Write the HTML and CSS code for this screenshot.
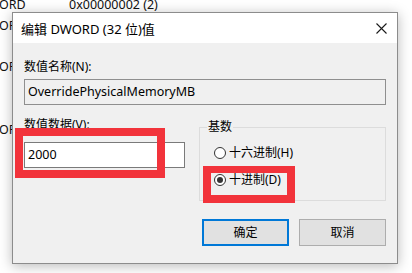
FILE: index.html
```html
<!DOCTYPE html>
<html lang="zh-CN">
<head>
<meta charset="utf-8">
<title>编辑 DWORD (32 位)值</title>
<link rel="stylesheet" href="styles.css">
</head>
<body>
<div class="desk">
  <div class="bg-list">
    <div class="bg-row"><span class="bg-type">ORD</span><span class="bg-data">0x00000002 (2)</span></div>
    <div class="bg-row"><span class="bg-type clip">ORD</span></div>
    <div class="bg-row"></div>
    <div class="bg-row"><span class="bg-type clip">ORD</span></div>
    <div class="bg-row"></div>
    <div class="bg-row"></div>
    <div class="bg-row"><span class="bg-type clip">ORD</span></div>
  </div>

  <div class="dialog">
    <div class="titlebar">
      <span class="title">编辑 DWORD (32 位)值</span>
      <svg class="close" width="11" height="11" viewBox="0 0 11 11" aria-hidden="true">
        <path d="M0.5 0.5 L10.5 10.5 M10.5 0.5 L0.5 10.5" stroke="#1a1a1a" stroke-width="1.1" fill="none"/>
      </svg>
    </div>
    <div class="body">
      <div class="label">数值名称(N):</div>
      <div class="field readonly">OverridePhysicalMemoryMB</div>
      <div class="row">
        <div class="col-left">
          <div class="label">数值数据(V):</div>
          <div class="field value">2000</div>
        </div>
        <fieldset class="group">
          <legend>基数</legend>
          <div class="radio"><span class="dot"></span><span>十六进制(H)</span></div>
          <div class="radio"><span class="dot checked"></span><span>十进制(D)</span></div>
        </fieldset>
      </div>
      <div class="buttons">
        <div class="btn default">确定</div>
        <div class="btn">取消</div>
      </div>
    </div>
  </div>

  <div class="mark mark-value"></div>
  <div class="mark mark-radio"></div>
</div>
</body>
</html>
```

FILE: styles.css
```css
html, body {
  margin: 0;
  padding: 0;
  background: #ffffff;
}
body {
  font-family: "Noto Sans", "Noto Sans CJK SC", sans-serif;
  font-size: 12px;
  color: #000;
}
.desk {
  position: relative;
  width: 412px;
  height: 273px;
  overflow: hidden;
  background: #fff;
}
.bg-list {
  margin-top: -4px;
}
.bg-row {
  display: flex;
  height: 20.8px;
  line-height: 18px;
  font-size: 12.5px;
  color: #111;
}
.bg-type {
  width: 70px;
  margin-left: -1px;
}
.bg-type.clip {
  width: 13px;
  overflow: hidden;
  white-space: nowrap;
}
.dialog {
  position: absolute;
  left: 12px;
  top: 12px;
  width: 384px;
  height: 250px;
  border: 1px solid #8c8c8c;
  background: #f0f0f0;
  box-shadow: 0 2px 12px rgba(0, 0, 0, 0.28);
  display: flex;
  flex-direction: column;
}
.titlebar {
  height: 30px;
  background: #fff;
  display: flex;
  align-items: center;
  justify-content: space-between;
  padding: 0 10px 0 8px;
}
.title {
  font-size: 13px;
}
.close {
  display: block;
}
.body {
  flex: 1;
  padding: 16px 11px 0 11px;
  display: flex;
  flex-direction: column;
}
.label {
  height: 16px;
  line-height: 16px;
}
.field {
  box-sizing: border-box;
  height: 26px;
  border: 1px solid #7a7a7a;
  line-height: 24px;
  padding-left: 3px;
  font-size: 12.5px;
}
.readonly {
  margin-top: 4px;
  background: #f0f0f0;
  border-color: #8f8f8f;
}
.row {
  display: flex;
  margin-top: 12px;
  gap: 14px;
}
.col-left {
  width: 161px;
}
.value {
  margin-top: 9px;
  background: #fff;
}
.group {
  margin: 2px 0 0 0;
  width: 187px;
  box-sizing: border-box;
  height: 82px;
  border: 1px solid #dcdcdc;
  padding: 10px 0 0 15px;
  min-width: 0;
}
.group legend {
  padding: 0 1px;
  margin-left: -8px;
  line-height: 16px;
}
.radio {
  display: flex;
  align-items: center;
  gap: 3px;
  height: 16px;
  line-height: 16px;
  margin-bottom: 11px;
  margin-left: -1px;
}
.dot {
  box-sizing: border-box;
  width: 12px;
  height: 12px;
  border: 1px solid #333;
  border-radius: 50%;
  background: #fff;
  display: flex;
  align-items: center;
  justify-content: center;
}
.dot.checked::after {
  content: "";
  width: 6px;
  height: 6px;
  border-radius: 50%;
  background: #333;
}
.buttons {
  display: flex;
  justify-content: flex-end;
  gap: 10px;
  margin-top: 18px;
}
.btn {
  box-sizing: border-box;
  width: 87px;
  height: 27px;
  border: 1px solid #adadad;
  background: #e1e1e1;
  text-align: center;
  line-height: 25px;
}
.btn.default {
  border: 2px solid #0078d7;
  line-height: 23px;
}
.mark {
  position: absolute;
  box-sizing: border-box;
  border: 8px solid #f2333b;
}
.mark-value {
  left: 15px;
  top: 128px;
  width: 150px;
  height: 50px;
}
.mark-radio {
  left: 203px;
  top: 166px;
  width: 92px;
  height: 37px;
  border-width: 7px 8px 8px 8px;
}
```
